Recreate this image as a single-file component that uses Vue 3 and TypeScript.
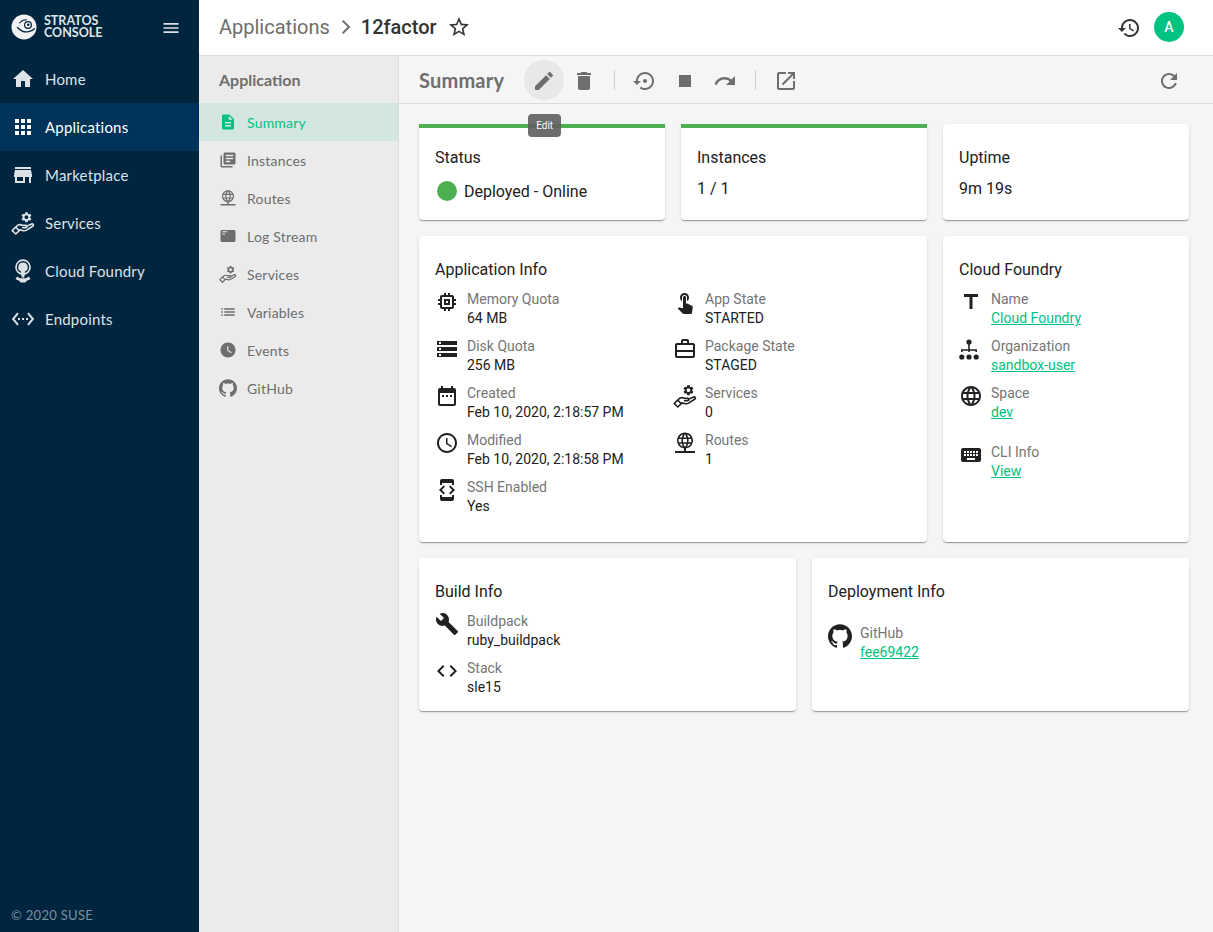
<script setup lang="ts">
interface Field {
  icon: string;
  label: string;
  value: string;
  link?: boolean;
  spaced?: boolean;
}

const paths: Record<string, string> = {
  home: 'M10 20v-6h4v6h5v-8h3L12 3 2 12h3v8z',
  apps: 'M4 8h4V4H4v4zm6 12h4v-4h-4v4zm-6 0h4v-4H4v4zm0-6h4v-4H4v4zm6 0h4v-4h-4v4zm6-10v4h4V4h-4zm-6 4h4V4h-4v4zm6 6h4v-4h-4v4zm0 6h4v-4h-4v4z',
  store: 'M20 4H4v2h16V4zm1 10v-2l-1-5H4l-1 5v2h1v6h10v-6h4v6h2v-6h1zm-9 4H6v-4h6v4z',
  ethernet: 'M7.77 6.76L6.23 5.48.82 12l5.41 6.52 1.54-1.28L3.42 12l4.35-5.24zM7 13h2v-2H7v2zm10-2h-2v2h2v-2zm-6 2h2v-2h-2v2zm6.77-7.52l-1.54 1.28L20.58 12l-4.35 5.24 1.54 1.28L23.18 12l-5.41-6.52z',
  menu: 'M3 18h18v-2H3v2zm0-5h18v-2H3v2zm0-7v2h18V6H3z',
  star: 'M22 9.24l-7.19-.62L12 2 9.19 8.63 2 9.24l5.46 4.73L5.82 21 12 17.27 18.18 21l-1.63-7.03L22 9.24zM12 15.4l-3.76 2.27 1-4.28-3.32-2.88 4.38-.38L12 6.1l1.71 4.04 4.38.38-3.32 2.88 1 4.28L12 15.4z',
  history: 'M13 3c-4.97 0-9 4.03-9 9H1l3.89 3.89.07.14L9 12H6c0-3.87 3.13-7 7-7s7 3.13 7 7-3.13 7-7 7c-1.93 0-3.68-.79-4.94-2.06l-1.42 1.42C8.27 19.99 10.51 21 13 21c4.97 0 9-4.03 9-9s-4.03-9-9-9zm-1 5v5l4.28 2.54.72-1.21-3.5-2.08V8H12z',
  description: 'M14 2H6c-1.1 0-1.99.9-1.99 2L4 20c0 1.1.89 2 1.99 2H18c1.1 0 2-.9 2-2V8l-6-6zm2 16H8v-2h8v2zm0-4H8v-2h8v2zm-3-5V3.5L18.5 9H13z',
  library: 'M4 6H2v14c0 1.1.9 2 2 2h14v-2H4V6zm16-4H8c-1.1 0-2 .9-2 2v12c0 1.1.9 2 2 2h12c1.1 0 2-.9 2-2V4c0-1.1-.9-2-2-2zm-1 9H9V9h10v2zm-4 4H9v-2h6v2zm4-8H9V5h10v2z',
  language: 'M11.99 2C6.47 2 2 6.48 2 12s4.47 10 9.99 10C17.52 22 22 17.52 22 12S17.52 2 11.99 2zm6.93 6h-2.95c-.32-1.25-.78-2.45-1.38-3.56 1.84.63 3.37 1.91 4.33 3.56zM12 4.04c.83 1.2 1.48 2.53 1.91 3.96h-3.82c.43-1.43 1.08-2.76 1.91-3.96zM4.26 14C4.1 13.36 4 12.69 4 12s.1-1.36.26-2h3.38c-.08.66-.14 1.32-.14 2 0 .68.06 1.34.14 2H4.26zm.82 2h2.95c.32 1.25.78 2.45 1.38 3.56-1.84-.63-3.37-1.9-4.33-3.56zm2.95-8H5.08c.96-1.66 2.49-2.93 4.33-3.56C8.81 5.55 8.35 6.75 8.03 8zM12 19.96c-.83-1.2-1.48-2.53-1.91-3.96h3.82c-.43 1.43-1.08 2.76-1.91 3.96zM14.34 14H9.66c-.09-.66-.16-1.32-.16-2 0-.68.07-1.35.16-2h4.68c.09.65.16 1.32.16 2 0 .68-.07 1.34-.16 2zm.25 5.56c.6-1.11 1.06-2.31 1.38-3.56h2.95c-.96 1.65-2.49 2.93-4.33 3.56zM16.36 14c.08-.66.14-1.32.14-2 0-.68-.06-1.34-.14-2h3.38c.16.64.26 1.31.26 2s-.1 1.36-.26 2h-3.38z',
  list: 'M3 13h2v-2H3v2zm0 4h2v-2H3v2zm0-8h2V7H3v2zm4 4h14v-2H7v2zm0 4h14v-2H7v2zM7 7v2h14V7H7z',
  clockFill: 'M12 2C6.5 2 2 6.5 2 12s4.5 10 10 10 10-4.5 10-10S17.5 2 12 2zm4.2 14.2L11 13V7h1.5v5.2l4.5 2.7-.8 1.3z',
  github: 'M12 .297c-6.63 0-12 5.373-12 12 0 5.303 3.438 9.8 8.205 11.385.6.113.82-.258.82-.577 0-.285-.01-1.04-.015-2.04-3.338.724-4.042-1.61-4.042-1.61C4.422 18.07 3.633 17.7 3.633 17.7c-1.087-.744.084-.729.084-.729 1.205.084 1.838 1.236 1.838 1.236 1.07 1.835 2.809 1.305 3.495.998.108-.776.417-1.305.76-1.605-2.665-.3-5.466-1.332-5.466-5.93 0-1.31.465-2.38 1.235-3.22-.135-.303-.54-1.523.105-3.176 0 0 1.005-.322 3.3 1.23.96-.267 1.98-.399 3-.405 1.02.006 2.04.138 3 .405 2.28-1.552 3.285-1.23 3.285-1.23.645 1.653.24 2.873.12 3.176.765.84 1.23 1.91 1.23 3.22 0 4.61-2.805 5.625-5.475 5.92.42.36.81 1.096.81 2.22 0 1.606-.015 2.896-.015 3.286 0 .315.21.69.825.57C20.565 22.092 24 17.592 24 12.297c0-6.627-5.373-12-12-12',
  edit: 'M3 17.25V21h3.75L17.81 9.94l-3.75-3.75L3 17.25zM20.71 7.04c.39-.39.39-1.02 0-1.41l-2.34-2.34c-.39-.39-1.02-.39-1.41 0l-1.83 1.83 3.75 3.75 1.83-1.83z',
  delete: 'M6 19c0 1.1.9 2 2 2h8c1.1 0 2-.9 2-2V7H6v12zM19 4h-3.5l-1-1h-5l-1 1H5v2h14V4z',
  restore: 'M14 12c0-1.1-.9-2-2-2s-2 .9-2 2 .9 2 2 2 2-.9 2-2zm-2-9c-4.97 0-9 4.03-9 9H0l4 4 4-4H5c0-3.87 3.13-7 7-7s7 3.13 7 7-3.13 7-7 7c-1.51 0-2.91-.49-4.06-1.3l-1.42 1.44C8.04 20.3 9.94 21 12 21c4.97 0 9-4.03 9-9s-4.03-9-9-9z',
  stop: 'M6 6h12v12H6z',
  redo: 'M18.4 10.6C16.55 8.99 14.15 8 11.5 8c-4.65 0-8.58 3.03-9.96 7.22L3.9 16c1.05-3.19 4.05-5.5 7.6-5.5 1.95 0 3.73.72 5.12 1.88L13 16h9V7l-3.6 3.6z',
  launch: 'M19 19H5V5h7V3H5c-1.11 0-2 .9-2 2v14c0 1.1.89 2 2 2h14c1.1 0 2-.9 2-2v-7h-2v7zM14 3v2h3.59l-9.83 9.83 1.41 1.41L19 6.41V10h2V3h-7z',
  refresh: 'M17.65 6.35C16.2 4.9 14.21 4 12 4c-4.42 0-7.99 3.58-7.99 8s3.57 8 7.99 8c3.73 0 6.84-2.55 7.73-6h-2.08c-.82 2.33-3.04 4-5.65 4-3.31 0-6-2.69-6-6s2.69-6 6-6c1.66 0 3.14.69 4.22 1.78L13 11h7V4l-2.35 2.35z',
  memory: 'M15 9H9v6h6V9zm-2 4h-2v-2h2v2zm8-2V9h-2V7c0-1.1-.9-2-2-2h-2V3h-2v2h-2V3H9v2H7c-1.1 0-2 .9-2 2v2H3v2h2v2H3v2h2v2c0 1.1.9 2 2 2h2v2h2v-2h2v2h2v-2h2c1.1 0 2-.9 2-2v-2h2v-2h-2v-2h2zm-4 6H7V7h10v10z',
  storage: 'M2 20h20v-4H2v4zm2-3h2v2H4v-2zM2 4v4h20V4H2zm4 3H4V5h2v2zm-4 7h20v-4H2v4zm2-3h2v2H4v-2z',
  calendar: 'M9 11H7v2h2v-2zm4 0h-2v2h2v-2zm4 0h-2v2h2v-2zm2-7h-1V2h-2v2H8V2H6v2H5c-1.11 0-1.99.9-1.99 2L3 20c0 1.1.89 2 2 2h14c1.1 0 2-.9 2-2V6c0-1.1-.9-2-2-2zm0 16H5V9h14v11z',
  clock: 'M11.99 2C6.47 2 2 6.48 2 12s4.47 10 9.99 10C17.52 22 22 17.52 22 12S17.52 2 11.99 2zM12 20c-4.42 0-8-3.58-8-8s3.58-8 8-8 8 3.58 8 8-3.58 8-8 8zm.5-13H11v6l5.25 3.15.75-1.23-4.5-2.67z',
  developer: 'M7 5h10v2h2V3c0-1.1-.9-1.99-2-1.99L7 1c-1.1 0-2 .9-2 2v4h2V5zm8.41 11.59L20 12l-4.59-4.59L14 8.83 17.17 12 14 15.17l1.41 1.42zM10 15.17L6.83 12 10 8.83 8.59 7.41 4 12l4.59 4.59L10 15.17zM17 19H7v-2H5v4c0 1.1.9 2 2 2h10c1.1 0 2-.9 2-2v-4h-2v2z',
  touch: 'M9 11.24V7.5C9 6.12 10.12 5 11.5 5S14 6.12 14 7.5v3.74c1.21-.81 2-2.18 2-3.74C16 5.01 13.99 3 11.5 3S7 5.01 7 7.5c0 1.56.79 2.93 2 3.74zm9.84 4.63l-4.54-2.26c-.17-.07-.35-.11-.54-.11H13v-6c0-.83-.67-1.5-1.5-1.5S10 6.67 10 7.5v10.74l-3.43-.72c-.08-.01-.15-.03-.24-.03-.31 0-.59.13-.79.33l-.79.8 4.94 4.94c.27.27.65.44 1.06.44h6.79c.75 0 1.33-.55 1.44-1.28l.75-5.27c.01-.07.02-.14.02-.2 0-.62-.38-1.16-.91-1.38z',
  work: 'M14 6V4h-4v2h4zM4 8v11h16V8H4zm16-2c1.11 0 2 .89 2 2v11c0 1.11-.89 2-2 2H4c-1.11 0-2-.89-2-2l.01-11c0-1.11.88-2 1.99-2h4V4c0-1.11.89-2 2-2h4c1.11 0 2 .89 2 2v2h4zM3 13h18v2H3z',
  title: 'M5 4v3h5.5v12h3V7H19V4z',
  keyboard: 'M20 5H4c-1.1 0-1.99.9-1.99 2L2 17c0 1.1.9 2 2 2h16c1.1 0 2-.9 2-2V7c0-1.1-.9-2-2-2zm-9 3h2v2h-2V8zm0 3h2v2h-2v-2zM8 8h2v2H8V8zm0 3h2v2H8v-2zm-1 2H5v-2h2v2zm0-3H5V8h2v2zm9 7H8v-2h8v2zm0-4h-2v-2h2v2zm0-3h-2V8h2v2zm3 3h-2v-2h2v2zm0-3h-2V8h2v2z',
  build: 'M22.7 19l-9.1-9.1c.9-2.3.4-5-1.5-6.9-2-2-5-2.4-7.4-1.3L9 6 6 9 1.6 4.7C.4 7.1.9 10.1 2.9 12.1c1.9 1.9 4.6 2.4 6.9 1.5l9.1 9.1c.4.4 1 .4 1.4 0l2.3-2.3c.5-.4.5-1.1.1-1.4z',
  code: 'M9.4 16.6L4.8 12l4.6-4.6L8 6l-6 6 6 6 1.4-1.4zm5.2 0l4.6-4.6-4.6-4.6L16 6l6 6-6 6-1.4-1.4z',
  logstream: 'M20 4H4c-1.1 0-2 .9-2 2v12c0 1.1.9 2 2 2h16c1.1 0 2-.9 2-2V6c0-1.1-.9-2-2-2zM11 7H4.5V5.6H11zM8 10H4.5V8.6H8z',
  org: 'M7.4 5a2.6 2.6 0 1 1 5.2 0 2.6 2.6 0 0 1-5.2 0zM9.2 7h1.6v5.2H18V15h-1.6v-1.2h-5.6V15H9.2v-1.2H3.6V15H2v-2.8h7.2zM.2 20a2.6 2.6 0 1 1 5.2 0 2.6 2.6 0 0 1-5.2 0zm7.2 0a2.6 2.6 0 1 1 5.2 0 2.6 2.6 0 0 1-5.2 0zm7.2 0a2.6 2.6 0 1 1 5.2 0 2.6 2.6 0 0 1-5.2 0z',
  gear: 'M19.14 12.94c.04-.3.06-.61.06-.94 0-.32-.02-.64-.07-.94l2.03-1.58c.18-.14.23-.41.12-.61l-1.92-3.32c-.12-.22-.37-.29-.59-.22l-2.39.96c-.5-.38-1.03-.7-1.62-.94l-.36-2.54c-.04-.24-.24-.41-.48-.41h-3.84c-.24 0-.43.17-.47.41l-.36 2.54c-.59.24-1.13.57-1.62.94l-2.39-.96c-.22-.08-.47 0-.59.22L2.74 8.87c-.12.21-.08.47.12.61l2.03 1.58c-.05.3-.07.63-.07.94s.02.64.07.94l-2.03 1.58c-.18.14-.23.41-.12.61l1.92 3.32c.12.22.37.29.59.22l2.39-.96c.5.38 1.03.7 1.62.94l.36 2.54c.05.24.24.41.48.41h3.84c.24 0 .44-.17.47-.41l.36-2.54c.59-.24 1.13-.56 1.62-.94l2.39.96c.22.08.47 0 .59-.22l1.92-3.32c.12-.22.07-.47-.12-.61l-2.01-1.58zM12 15.6c-1.98 0-3.6-1.62-3.6-3.6s1.62-3.6 3.6-3.6 3.6 1.62 3.6 3.6-1.62 3.6-3.6 3.6z',
};

const mainNav = [
  { icon: 'home', label: 'Home' },
  { icon: 'apps', label: 'Applications', active: true },
  { icon: 'store', label: 'Marketplace' },
  { icon: 'services', label: 'Services' },
  { icon: 'cf', label: 'Cloud Foundry' },
  { icon: 'ethernet', label: 'Endpoints' },
];

const subNav = [
  { icon: 'description', label: 'Summary', active: true },
  { icon: 'library', label: 'Instances' },
  { icon: 'routes', label: 'Routes' },
  { icon: 'logstream', label: 'Log Stream' },
  { icon: 'services', label: 'Services' },
  { icon: 'list', label: 'Variables' },
  { icon: 'clockFill', label: 'Events' },
  { icon: 'github', label: 'GitHub' },
];

const appLeft: Field[] = [
  { icon: 'memory', label: 'Memory Quota', value: '64 MB' },
  { icon: 'storage', label: 'Disk Quota', value: '256 MB' },
  { icon: 'calendar', label: 'Created', value: 'Feb 10, 2020, 2:18:57 PM' },
  { icon: 'clock', label: 'Modified', value: 'Feb 10, 2020, 2:18:58 PM' },
  { icon: 'developer', label: 'SSH Enabled', value: 'Yes' },
];

const appRight: Field[] = [
  { icon: 'touch', label: 'App State', value: 'STARTED' },
  { icon: 'work', label: 'Package State', value: 'STAGED' },
  { icon: 'services', label: 'Services', value: '0' },
  { icon: 'routes', label: 'Routes', value: '1' },
];

const cfFields: Field[] = [
  { icon: 'title', label: 'Name', value: 'Cloud Foundry', link: true },
  { icon: 'org', label: 'Organization', value: 'sandbox-user', link: true },
  { icon: 'language', label: 'Space', value: 'dev', link: true },
  { icon: 'keyboard', label: 'CLI Info', value: 'View', link: true, spaced: true },
];

const buildFields: Field[] = [
  { icon: 'build', label: 'Buildpack', value: 'ruby_buildpack' },
  { icon: 'code', label: 'Stack', value: 'sle15' },
];

const deployFields: Field[] = [
  { icon: 'github', label: 'GitHub', value: 'fee69422', link: true, spaced: true },
];

const fieldGroups = { appLeft, appRight, cfFields, buildFields, deployFields };
</script>

<template>
  <div class="shell">
    <svg width="0" height="0" class="defs" aria-hidden="true">
      <symbol id="ic-services" viewBox="0 0 24 24">
        <path fill="currentColor" transform="translate(9.2 0) scale(.52)" :d="paths.gear" />
        <path
          fill="none"
          stroke="currentColor"
          stroke-width="1.6"
          stroke-linejoin="round"
          stroke-linecap="round"
          d="M1.2 19.6l3.4-3.6 3.6 3.6-3.4 3.4zM5.4 15.4c1.8-1.7 3.7-2.2 5.6-1.2h3.8c1.4 0 1.4 2.4 0 2.4h-3.2M15.4 15.4l4.6-2.2c2-.9 3.2 .9 1.6 2.1l-6 3.8c-1.4.8-2.8.8-4 .4l-2.6-.6"
        />
      </symbol>
      <symbol id="ic-cf" viewBox="0 0 24 24">
        <circle cx="12" cy="8.2" r="7" fill="none" stroke="currentColor" stroke-width="1.7" />
        <path fill="currentColor" d="M12 3.6a4.6 4.6 0 0 1 2 8.8l-.7 6h-2.6l-.7-6a4.6 4.6 0 0 1 2-8.8z" />
        <path fill="currentColor" d="M6 17.6l3.2 1.6h5.6l3.2-1.6 1.4 2.6-3.6 1.6-1.4 1.8H9.6l-1.4-1.8-3.6-1.6z" />
      </symbol>
      <symbol id="ic-routes" viewBox="0 0 24 24">
        <path fill="currentColor" transform="translate(2.4 0) scale(.8)" :d="paths.language" />
        <path fill="currentColor" d="M11 16h2v4h-2zM2 20h20v2H2z" />
      </symbol>
    </svg>

    <aside class="sidenav">
      <div class="brand">
        <svg class="logo" viewBox="0 0 26 26" width="26" height="26">
          <circle cx="13" cy="13" r="12.5" fill="#f2f2f2" />
          <path fill="none" stroke="#00263f" stroke-width="1.3" stroke-linecap="round" d="M6.5 13.5c3 3.2 7.5 5 11 4.2 2.2-.5 4.400-1.500 6-3" />
          <path fill="none" stroke="#00263f" stroke-width="1.1" stroke-linecap="round" d="M8.5 9c2-2.2 4.5-3.2 7-3.2" />
          <circle cx="17" cy="11" r="3.4" fill="none" stroke="#00263f" stroke-width="1.2" />
          <circle cx="17.3" cy="10.7" r="1.3" fill="#00263f" />
        </svg>
        <div class="brand-text">STRATOS<br />CONSOLE</div>
        <svg class="burger" viewBox="0 0 24 24" width="20" height="20"><path fill="currentColor" :d="paths.menu" /></svg>
      </div>
      <nav>
        <a v-for="item in mainNav" :key="item.label" class="nav-item" :class="{ active: item.active }">
          <svg v-if="paths[item.icon]" viewBox="0 0 24 24" width="24" height="24"><path fill="currentColor" :d="paths[item.icon]" /></svg>
          <svg v-else width="24" height="24"><use :href="`#ic-${item.icon}`" /></svg>
          <span>{{ item.label }}</span>
        </a>
      </nav>
      <div class="copyright">© 2020 SUSE</div>
    </aside>

    <div class="content">
      <header class="topbar">
        <span class="crumb">Applications</span>
        <svg class="crumb-sep" viewBox="0 0 24 24" width="24" height="24">
          <path fill="none" stroke="currentColor" stroke-width="2" d="M8.6 5.6l6.4 6.4-6.4 6.4" />
        </svg>
        <span class="crumb-current">12factor</span>
        <svg class="star" viewBox="0 0 24 24" width="24" height="24"><path fill="currentColor" :d="paths.star" /></svg>
        <div class="topbar-right">
          <svg class="history" viewBox="0 0 24 24" width="24" height="24"><path fill="currentColor" :d="paths.history" /></svg>
          <div class="avatar">A</div>
        </div>
      </header>

      <div class="body">
        <aside class="subnav">
          <div class="subnav-title">Application</div>
          <a v-for="item in subNav" :key="item.label" class="sub-item" :class="{ active: item.active }">
            <svg v-if="paths[item.icon]" viewBox="0 0 24 24" width="18" height="18"><path fill="currentColor" :d="paths[item.icon]" /></svg>
            <svg v-else width="18" height="18"><use :href="`#ic-${item.icon}`" /></svg>
            <span>{{ item.label }}</span>
          </a>
        </aside>

        <main class="page">
          <div class="toolbar">
            <h2>Summary</h2>
            <div class="actions">
              <button class="icon-btn hover">
                <svg viewBox="0 0 24 24" width="24" height="24"><path fill="currentColor" :d="paths.edit" /></svg>
                <span class="tooltip">Edit</span>
              </button>
              <button class="icon-btn"><svg viewBox="0 0 24 24" width="24" height="24"><path fill="currentColor" :d="paths.delete" /></svg></button>
              <i class="divider" />
              <button class="icon-btn"><svg viewBox="0 0 24 24" width="24" height="24"><path fill="currentColor" :d="paths.restore" /></svg></button>
              <button class="icon-btn"><svg viewBox="0 0 24 24" width="24" height="24"><path fill="currentColor" :d="paths.stop" /></svg></button>
              <button class="icon-btn"><svg viewBox="0 0 24 24" width="24" height="24"><path fill="currentColor" :d="paths.redo" /></svg></button>
              <i class="divider" />
              <button class="icon-btn"><svg viewBox="0 0 24 24" width="24" height="24"><path fill="currentColor" :d="paths.launch" /></svg></button>
            </div>
            <button class="icon-btn refresh"><svg viewBox="0 0 24 24" width="24" height="24"><path fill="currentColor" :d="paths.refresh" /></svg></button>
          </div>

          <div class="cards">
            <section class="card span-2 bar">
              <h3>Status</h3>
              <div class="status"><i class="dot" />Deployed - Online</div>
            </section>
            <section class="card span-2 bar">
              <h3>Instances</h3>
              <div class="big">1 / 1</div>
            </section>
            <section class="card span-2 short">
              <h3>Uptime</h3>
              <div class="big">9m 19s</div>
            </section>

            <section class="card span-4 tall">
              <h3>Application Info</h3>
              <div class="two-col">
                <div v-for="group in [fieldGroups.appLeft, fieldGroups.appRight]" :key="group[0].label" class="fields">
                  <div v-for="f in group" :key="f.label" class="field">
                    <svg v-if="paths[f.icon]" viewBox="0 0 24 24" width="24" height="24"><path fill="currentColor" :d="paths[f.icon]" /></svg>
                    <svg v-else width="24" height="24"><use :href="`#ic-${f.icon}`" /></svg>
                    <div>
                      <div class="label">{{ f.label }}</div>
                      <div class="value">{{ f.value }}</div>
                    </div>
                  </div>
                </div>
              </div>
            </section>

            <section class="card span-2 tall">
              <h3>Cloud Foundry</h3>
              <div class="fields">
                <div v-for="f in fieldGroups.cfFields" :key="f.label" class="field" :class="{ spaced: f.spaced }">
                  <svg viewBox="0 0 24 24" width="24" height="24"><path fill="currentColor" :d="paths[f.icon]" /></svg>
                  <div>
                    <div class="label">{{ f.label }}</div>
                    <a class="value link">{{ f.value }}</a>
                  </div>
                </div>
              </div>
            </section>

            <section class="card span-3">
              <h3>Build Info</h3>
              <div class="fields">
                <div v-for="f in fieldGroups.buildFields" :key="f.label" class="field">
                  <svg viewBox="0 0 24 24" width="24" height="24"><path fill="currentColor" :d="paths[f.icon]" /></svg>
                  <div>
                    <div class="label">{{ f.label }}</div>
                    <div class="value">{{ f.value }}</div>
                  </div>
                </div>
              </div>
            </section>

            <section class="card span-3">
              <h3>Deployment Info</h3>
              <div class="fields">
                <div v-for="f in fieldGroups.deployFields" :key="f.label" class="field" :class="{ spaced: f.spaced }">
                  <svg viewBox="0 0 24 24" width="24" height="24"><path fill="currentColor" :d="paths[f.icon]" /></svg>
                  <div>
                    <div class="label">{{ f.label }}</div>
                    <a class="value link">{{ f.value }}</a>
                  </div>
                </div>
              </div>
            </section>
          </div>
        </main>
      </div>
    </div>
  </div>
</template>

<style>
html,
body {
  margin: 0;
  background: #f5f5f5;
}
</style>

<style scoped>
.defs {
  position: absolute;
}

.shell {
  display: flex;
  height: 932px;
  overflow: hidden;
  font-family: Roboto, sans-serif;
  color: #212121;
}

.sidenav {
  width: 199px;
  flex-shrink: 0;
  display: flex;
  flex-direction: column;
  background: #00263f;
  color: #dde2e6;
  font-family: Lato, sans-serif;
}

.brand {
  height: 55px;
  display: flex;
  align-items: center;
  padding: 0 18px 0 11px;
  box-sizing: border-box;
}

.logo,
.brand-text {
  flex-shrink: 0;
  margin-top: -2px;
}

.brand-text {
  margin-left: 7px;
  font-size: 12.5px;
  line-height: 12px;
  font-weight: 700;
  color: #dfe4e8;
}

.burger {
  margin-left: auto;
}

.nav-item {
  height: 48px;
  display: flex;
  align-items: center;
  gap: 10px;
  padding-left: 11px;
  font-size: 15px;
  letter-spacing: 0.2px;
}

.nav-item.active {
  background: #003359;
  color: #fff;
}

.copyright {
  margin-top: auto;
  padding: 0 0 9px 11px;
  font-size: 13px;
  letter-spacing: 0.3px;
  color: #7b8f9f;
}

.content {
  flex: 1;
  min-width: 0;
  display: flex;
  flex-direction: column;
}

.topbar {
  height: 56px;
  box-sizing: border-box;
  flex-shrink: 0;
  display: flex;
  align-items: center;
  padding: 0 29px 1px 20px;
  background: #fff;
  border-bottom: 1px solid #dcdcdc;
  font-size: 20px;
}

.crumb {
  color: #6e6e6e;
}

.crumb-sep {
  margin: 0 3px 0 4px;
  color: #6e6e6e;
}

.crumb-current {
  font-weight: 500;
  color: #333;
}

.star {
  margin-left: 10px;
  color: #333;
}

.topbar-right {
  margin-left: auto;
  display: flex;
  align-items: center;
  gap: 13px;
  color: #333;
}

.history {
  margin-top: 2px;
}

.avatar {
  width: 30px;
  height: 30px;
  border-radius: 50%;
  background: #00c281;
  color: #fff;
  font-size: 14px;
  font-weight: 500;
  display: flex;
  align-items: center;
  justify-content: center;
}

.body {
  flex: 1;
  min-height: 0;
  display: flex;
}

.subnav {
  width: 200px;
  flex-shrink: 0;
  box-sizing: border-box;
  background: #ebebeb;
  border-right: 1px solid #dcdcdc;
  font-family: Lato, sans-serif;
  color: #6e6e6e;
}

.subnav-title {
  height: 47px;
  display: flex;
  align-items: center;
  padding-left: 20px;
  font-size: 16px;
  font-weight: 700;
}

.sub-item {
  height: 38px;
  display: flex;
  align-items: center;
  gap: 10px;
  padding-left: 20px;
  font-size: 14px;
  letter-spacing: 0.2px;
}

.sub-item.active {
  background: #d4e6e0;
  color: #00c281;
}

.page {
  flex: 1;
  min-width: 0;
  background: #f5f5f5;
}

.toolbar {
  height: 48px;
  box-sizing: border-box;
  display: flex;
  align-items: center;
  padding: 1px 24px 0 20px;
  border-bottom: 1px solid #dcdcdc;
}

.toolbar h2 {
  margin: 0 20px 0 0;
  font: 700 20px Lato, sans-serif;
  letter-spacing: 0.2px;
  color: #6e6e6e;
}

.actions {
  display: flex;
  align-items: center;
}

.icon-btn {
  position: relative;
  width: 40px;
  height: 40px;
  padding: 0;
  border: 0;
  border-radius: 50%;
  background: transparent;
  color: #6e6e6e;
  display: flex;
  align-items: center;
  justify-content: center;
}

.icon-btn svg {
  margin-top: 2px;
}

.icon-btn.hover {
  background: #e8e8e8;
}

.refresh {
  margin-left: auto;
}

.divider {
  width: 1px;
  height: 20px;
  margin: 0 10px;
  background: #cfcfcf;
}

.tooltip {
  position: absolute;
  top: 54px;
  left: 4px;
  width: 33px;
  height: 23px;
  border-radius: 4px;
  background: rgba(97, 97, 97, 0.92);
  color: #fff;
  font: 10px/23px Roboto, sans-serif;
  text-align: center;
  z-index: 2;
}

.cards {
  display: grid;
  grid-template-columns: repeat(6, 1fr);
  gap: 16px;
  padding: 20px 24px 0 20px;
}

.card {
  box-sizing: border-box;
  padding: 24px 16px 14px;
  background: #fff;
  border-radius: 4px;
  box-shadow: 0 2px 1px -1px rgba(0, 0, 0, 0.2), 0 1px 1px 0 rgba(0, 0, 0, 0.14), 0 1px 3px 0 rgba(0, 0, 0, 0.12);
}

.span-2 {
  grid-column: span 2;
}

.span-3 {
  grid-column: span 3;
}

.span-4 {
  grid-column: span 4;
}

.tall {
  min-height: 306px;
}

.bar,
.short {
  min-height: 96px;
}

.bar {
  padding-top: 20px;
  border-top: 4px solid #4caf50;
  border-radius: 0 0 4px 4px;
}

h3 {
  margin: 0;
  font-size: 16px;
  line-height: 19px;
  font-weight: 400;
  color: #212121;
}

.big,
.status {
  font-size: 16px;
  line-height: 19px;
  margin-top: 12px;
}

.status {
  display: flex;
  align-items: center;
  gap: 7px;
  margin-top: 14px;
  padding-left: 2px;
}

.dot {
  width: 20px;
  height: 20px;
  border-radius: 50%;
  background: #4caf50;
}

.two-col {
  display: grid;
  grid-template-columns: 1fr 1fr;
}

.fields {
  display: flex;
  flex-direction: column;
  gap: 9px;
  margin-top: 11px;
}

.field {
  display: flex;
  gap: 8px;
}

.field.spaced {
  margin-top: 12px;
}

.field svg {
  flex-shrink: 0;
  color: #212121;
}

.label,
.value {
  font-size: 14px;
  line-height: 19px;
}

.label {
  color: #757575;
}

.value {
  color: #212121;
}

.link {
  display: block;
  color: #00c281;
  text-decoration: underline;
}
</style>
